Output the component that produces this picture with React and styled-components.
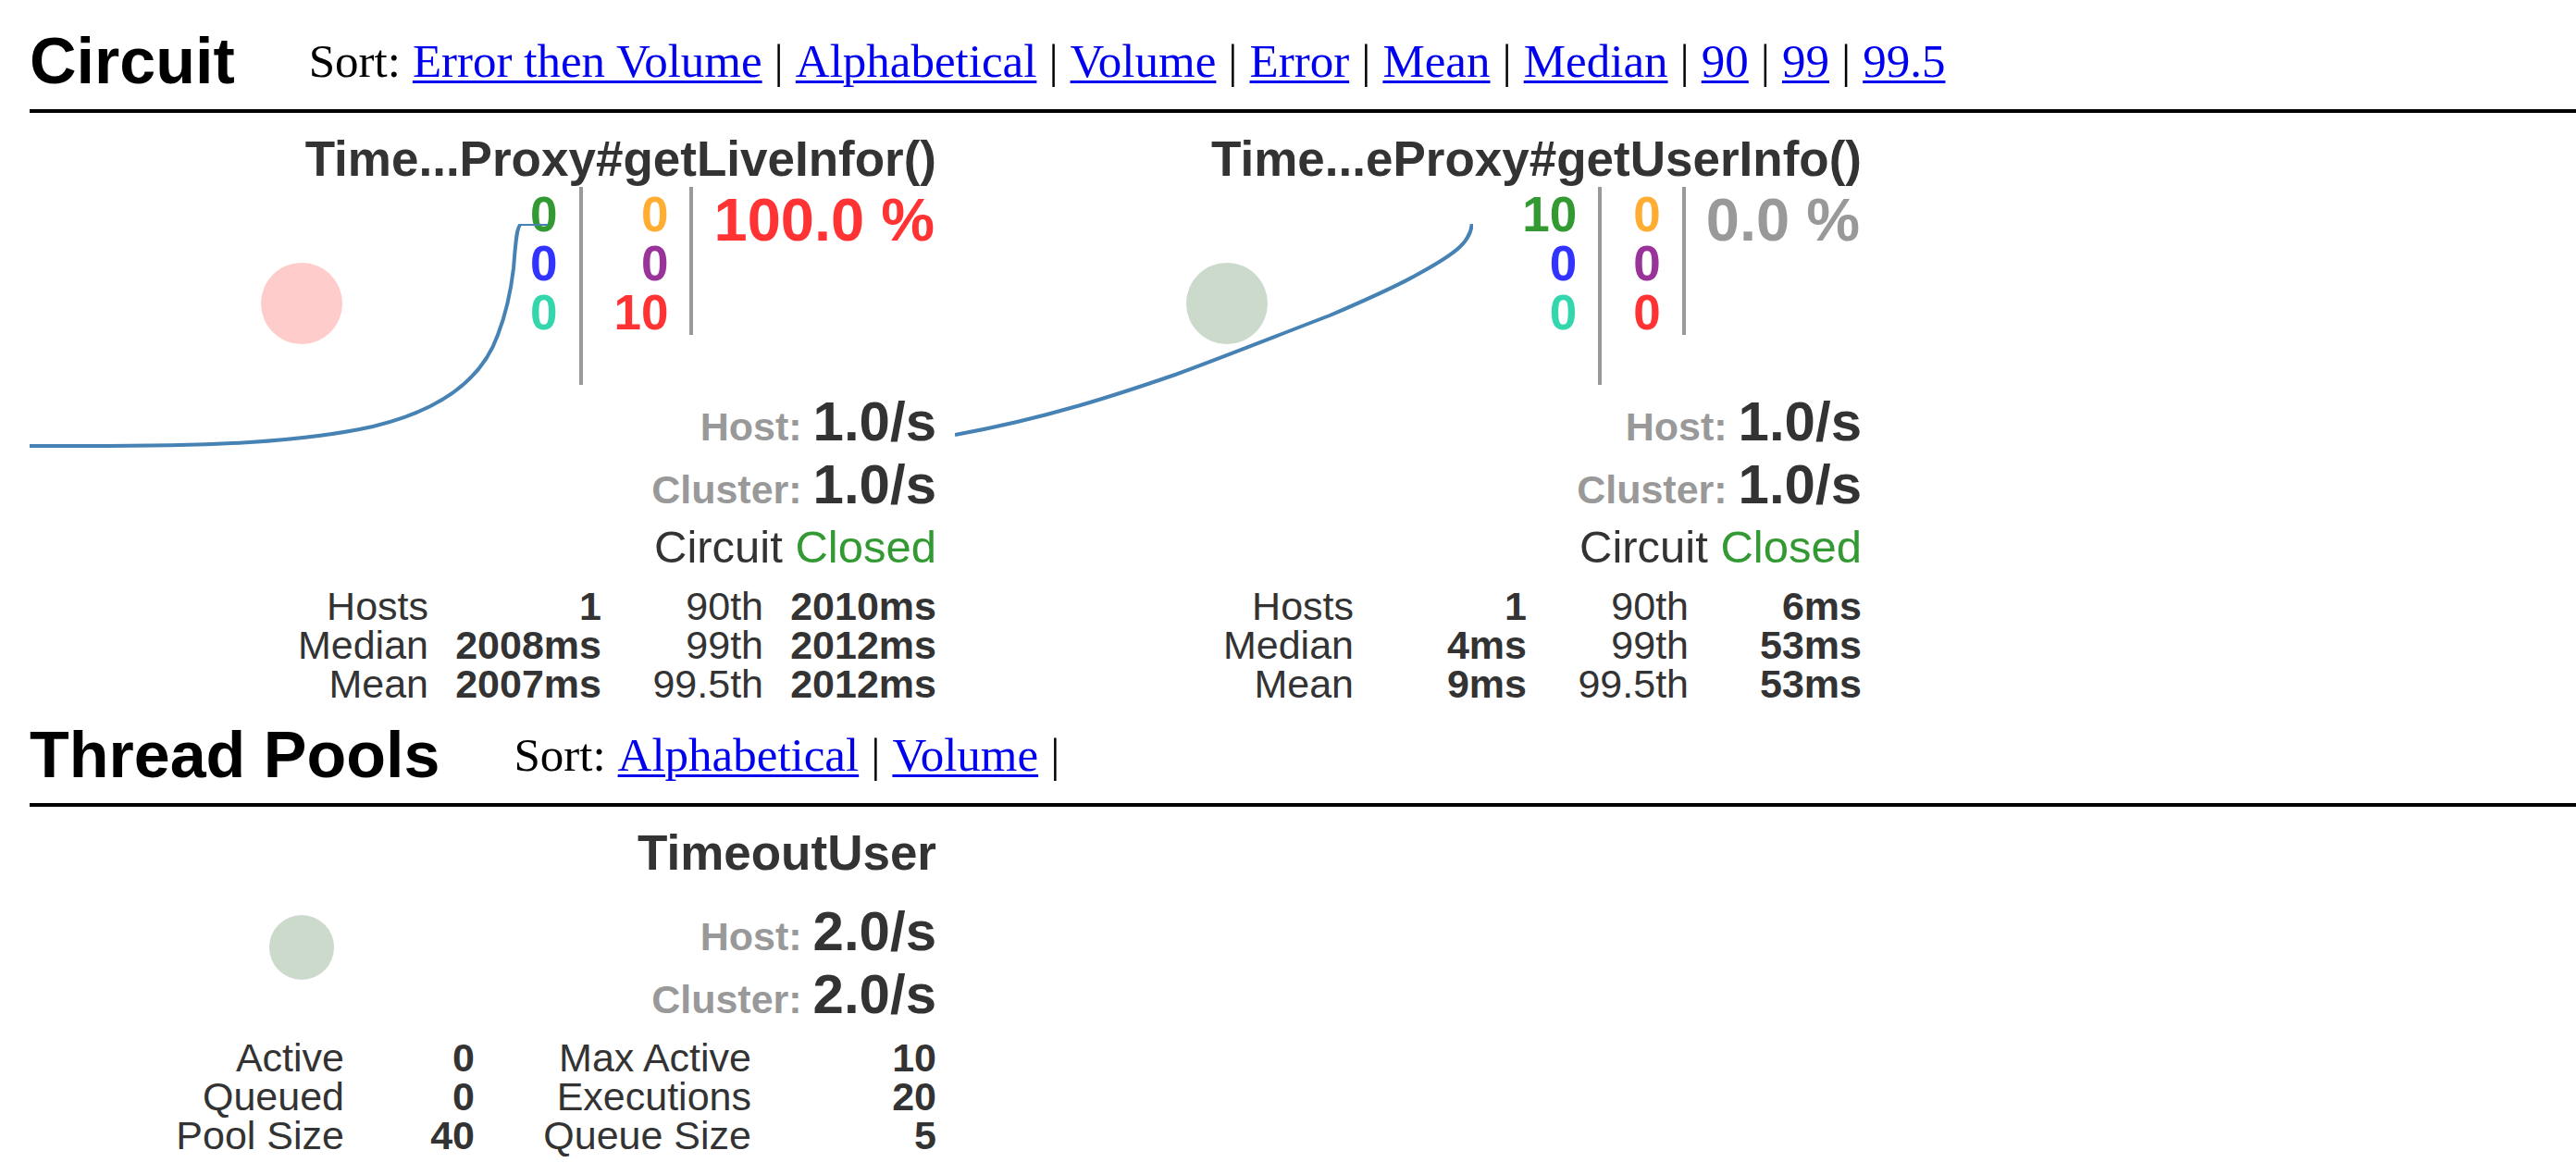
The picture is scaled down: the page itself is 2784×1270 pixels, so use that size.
import React from "react";
import styled, { createGlobalStyle } from "styled-components";

const GlobalStyle = createGlobalStyle`
  body {
    margin: 0;
    background: #fff;
    color: #000;
  }
`;

const sans = `"Liberation Sans", Arial, Helvetica, sans-serif`;
const serif = `"Liberation Serif", "Times New Roman", serif`;

const Page = styled.main`
  padding: 0 0 12px 32px;
`;

const Section = styled.section`
  display: flex;
  flex-direction: column;
`;

const SectionHeader = styled.header`
  display: flex;
  align-items: flex-start;
  gap: 80px;
  padding: ${(p) => p.$top}px 0 12px;
  border-bottom: 4px solid #000;
  white-space: nowrap;
`;

const Heading = styled.h2`
  margin: 0;
  font: bold 70px/80px ${sans};
`;

const SortBar = styled.nav`
  display: flex;
  gap: 13px;
  padding-top: 12px;
  font: 51px/56px ${serif};
`;

const SortLink = styled.a`
  color: #0000ee;
  text-decoration: underline;
  text-decoration-thickness: 3px;
  text-underline-offset: 4px;
`;

const Cards = styled.div`
  display: flex;
  flex-wrap: wrap;
  gap: 20px;
`;

const Card = styled.article`
  position: relative;
  width: 980px;
  font-family: ${sans};
  color: #333;
`;

const CardTitle = styled.h3`
  margin: 0;
  padding-top: 20px;
  font-size: 53px;
  line-height: 60px;
  text-align: right;
  white-space: nowrap;
`;

const Drawing = styled.svg`
  position: absolute;
  top: 0;
  left: 0;
  width: 980px;
  height: 400px;
  pointer-events: none;
`;

const Counters = styled.div`
  display: flex;
  justify-content: flex-end;
  align-items: flex-start;
  height: 214px;
`;

const CounterColumn = styled.div`
  box-sizing: border-box;
  height: ${(p) => p.$height}px;
  padding: 3px 23px 0 34px;
  border-right: 4px solid #999;
  font-size: 53px;
  font-weight: bold;
  line-height: 53px;
  text-align: right;
`;

const Counter = styled.div`
  color: ${(p) => p.$color};
`;

const ErrorRate = styled.div`
  padding: 0 2px 0 22px;
  font-size: 65px;
  font-weight: bold;
  line-height: 72px;
  color: ${(p) => p.$color};
`;

const Rates = styled.div`
  padding-top: ${(p) => p.$top}px;
`;

const Rate = styled.div`
  font-size: 60px;
  font-weight: bold;
  line-height: 68px;
  text-align: right;
`;

const RateLabel = styled.span`
  font-size: 43px;
  line-height: 1;
  color: #999;
`;

const CircuitStatus = styled.div`
  font-size: 49px;
  line-height: 66px;
  text-align: right;
`;

const Closed = styled.span`
  color: #339933;
`;

const Stats = styled.table`
  width: 100%;
  margin-top: ${(p) => p.$top}px;
  border-collapse: collapse;
  table-layout: fixed;
  font-size: 43px;
  line-height: 42px;
`;

const StatLabel = styled.th`
  padding: 0;
  font-weight: normal;
  text-align: right;
  white-space: nowrap;
`;

const StatValue = styled.td`
  padding: 0;
  font-weight: bold;
  text-align: right;
  white-space: nowrap;
`;

const StatCol = styled.col`
  width: ${(p) => p.$width}px;
`;

const circuitSorts = ["Error then Volume", "Alphabetical", "Volume", "Error", "Mean", "Median", "90", "99", "99.5"];
const poolSorts = ["Alphabetical", "Volume"];

const circuits = [
  {
    name: "Time...Proxy#getLiveInfor()",
    counts: [["0", "0", "0"], ["0", "0", "10"]],
    error: "100.0 %",
    errorColor: "#ff3333",
    bubble: "#ffcccc",
    line: "M0 360 H60 C110 360 190 359 238 356 C300 352 335 347 371 339 C450 320 490 285 506 240 C516 214 521 185 523 168 C525 145 526 120 532 120 H560",
    stats: [
      ["Hosts", "1", "90th", "2010ms"],
      ["Median", "2008ms", "99th", "2012ms"],
      ["Mean", "2007ms", "99.5th", "2012ms"],
    ],
  },
  {
    name: "Time...eProxy#getUserInfo()",
    counts: [["10", "0", "0"], ["0", "0", "0"]],
    error: "0.0 %",
    errorColor: "#999999",
    bubble: "#ccdacc",
    line: "M0 348 C100 330 180 303 238 283 C290 264 350 240 405 219 C440 204 480 186 501 174 C545 150 558 138 559 118",
    stats: [
      ["Hosts", "1", "90th", "6ms"],
      ["Median", "4ms", "99th", "53ms"],
      ["Mean", "9ms", "99.5th", "53ms"],
    ],
  },
];

const poolStats = [
  ["Active", "0", "Max Active", "10"],
  ["Queued", "0", "Executions", "20"],
  ["Pool Size", "40", "Queue Size", "5"],
];

function Sorts({ items, trailing }) {
  return (
    <SortBar>
      <span>Sort:</span>
      {items.map((item, i) => (
        <React.Fragment key={item}>
          <SortLink href="#">{item}</SortLink>
          {(trailing || i < items.length - 1) && <span>|</span>}
        </React.Fragment>
      ))}
    </SortBar>
  );
}

function RatePair({ value, top }) {
  return (
    <Rates $top={top}>
      <Rate><RateLabel>Host: </RateLabel>{value}</Rate>
      <Rate><RateLabel>Cluster: </RateLabel>{value}</Rate>
    </Rates>
  );
}

function StatsTable({ rows, widths, top }) {
  return (
    <Stats $top={top}>
      <colgroup>
        {widths.map((w, i) => <StatCol key={i} $width={w} />)}
      </colgroup>
      <tbody>
        {rows.map(([a, b, c, d]) => (
          <tr key={a}>
            <StatLabel scope="row">{a}</StatLabel>
            <StatValue>{b}</StatValue>
            <StatLabel scope="row">{c}</StatLabel>
            <StatValue>{d}</StatValue>
          </tr>
        ))}
      </tbody>
    </Stats>
  );
}

const columnColors = [
  ["#339933", "#3333ff", "#33d6ad"],
  ["#ffad33", "#993399", "#ff3333"],
];
const columnHeights = [214, 160];

function CircuitCard({ circuit }) {
  return (
    <Card>
      <CardTitle>{circuit.name}</CardTitle>
      <Counters>
        {circuit.counts.map((column, i) => (
          <CounterColumn key={i} $height={columnHeights[i]}>
            {column.map((n, j) => (
              <Counter key={j} $color={columnColors[i][j]}>{n}</Counter>
            ))}
          </CounterColumn>
        ))}
        <ErrorRate $color={circuit.errorColor}>{circuit.error}</ErrorRate>
      </Counters>
      <RatePair value="1.0/s" top={6} />
      <CircuitStatus>Circuit <Closed>Closed</Closed></CircuitStatus>
      <StatsTable rows={circuit.stats} widths={[431, 187, 175, 187]} top={10} />
      <Drawing viewBox="0 0 980 400" aria-hidden="true">
        <circle cx="294" cy="206" r="44" fill={circuit.bubble} />
        {/* The chart area clips the stroke at its top and right edges */}
        <svg x="0" y="120" width="560" height="280" viewBox="0 120 560 280">
          <path d={circuit.line} fill="none" stroke="#4682b4" strokeWidth="4" />
        </svg>
      </Drawing>
    </Card>
  );
}

export default function App() {
  return (
    <>
      <GlobalStyle />
      <Page>
        <Section>
          <SectionHeader $top={26}>
            <Heading>Circuit</Heading>
            <Sorts items={circuitSorts} />
          </SectionHeader>
          <Cards>
            {circuits.map((c) => <CircuitCard key={c.name} circuit={c} />)}
          </Cards>
        </Section>
        <Section>
          <SectionHeader $top={16}>
            <Heading>Thread Pools</Heading>
            <Sorts items={poolSorts} trailing />
          </SectionHeader>
          <Cards>
            <Card>
              <CardTitle>TimeoutUser</CardTitle>
              <RatePair value="2.0/s" top={21} />
              <StatsTable rows={poolStats} widths={[340, 141, 299, 200]} top={13} />
              <Drawing viewBox="0 0 980 400" aria-hidden="true">
                <circle cx="294" cy="152" r="35" fill="#ccdacc" />
              </Drawing>
            </Card>
          </Cards>
        </Section>
      </Page>
    </>
  );
}
